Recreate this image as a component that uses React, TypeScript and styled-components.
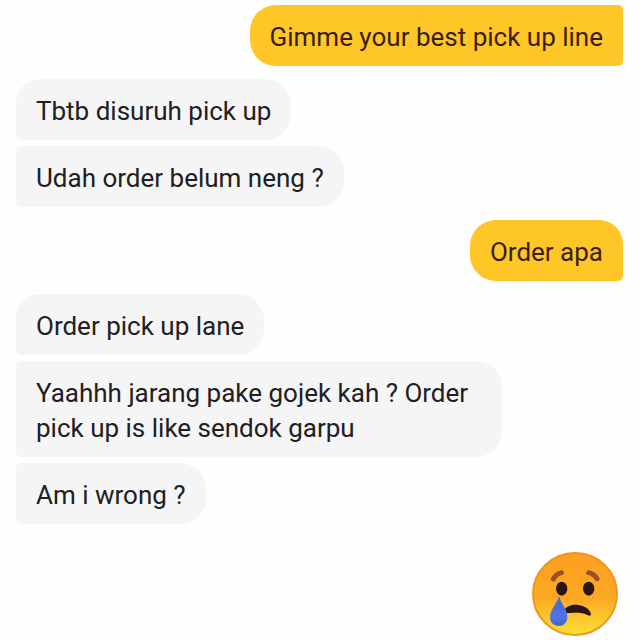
import React from "react";
import styled, { createGlobalStyle, css } from "styled-components";

const GlobalStyle = createGlobalStyle`
  * { box-sizing: border-box; }
  body { margin: 0; background: #fefefe; font-family: Roboto, sans-serif; }
`;

const Conversation = styled.main`
  display: flex;
  flex-direction: column;
  gap: 13px;
  padding: 5px 17px 2px 16px;
`;

const Group = styled.section<{ $sent?: boolean }>`
  display: flex;
  flex-direction: column;
  gap: 6px;
  align-items: ${(p) => (p.$sent ? "flex-end" : "flex-start")};
`;

const Bubble = styled.p<{ $sent?: boolean; $opensGroup?: boolean }>`
  margin: 0;
  max-width: 80%;
  padding: 15px 20px 11px;
  font-size: 26px;
  line-height: 35px;
  ${(p) =>
    p.$sent
      ? css`
          color: #3a1e0c;
          background: #ffc628;
          border-radius: 26px ${p.$opensGroup ? "24px" : "5px"} 5px 26px;
        `
      : css`
          color: #202022;
          background: #f5f5f5;
          border-radius: ${p.$opensGroup ? "24px" : "5px"} 26px 26px 5px;
        `}
`;

const Emoji = styled.svg`
  width: 88px;
  height: 88px;
  margin: 13px 4px 0 0;
`;

type MessageGroup = { sent: boolean; continued?: boolean; lines: string[] };

const messages: MessageGroup[] = [
  { sent: true, continued: true, lines: ["Gimme your best pick up line"] },
  { sent: false, lines: ["Tbtb disuruh pick up", "Udah order belum neng ?"] },
  { sent: true, lines: ["Order apa"] },
  {
    sent: false,
    lines: [
      "Order pick up lane",
      "Yaahhh jarang pake gojek kah ? Order pick up is like sendok garpu",
      "Am i wrong ?",
    ],
  },
];

function CryingFace() {
  return (
    <Emoji viewBox="33 30 264 264" role="img" aria-label="Crying face">
      <defs>
        <linearGradient id="face" x1="0" y1="0" x2="0" y2="1">
          <stop offset="0" stopColor="#fba01f" />
          <stop offset="0.55" stopColor="#fda823" />
          <stop offset="0.78" stopColor="#fcc62a" />
          <stop offset="1" stopColor="#fbdf38" />
        </linearGradient>
        <linearGradient id="rim" x1="0" y1="0" x2="0" y2="1">
          <stop offset="0" stopColor="#ee931f" />
          <stop offset="1" stopColor="#e0a023" />
        </linearGradient>
        <linearGradient id="tear" x1="0" y1="0" x2="0" y2="1">
          <stop offset="0" stopColor="#4668c4" />
          <stop offset="0.7" stopColor="#4f74e8" />
          <stop offset="1" stopColor="#4463cc" />
        </linearGradient>
      </defs>
      <ellipse cx="165" cy="162" rx="126" ry="123" fill="url(#face)" stroke="url(#rim)" strokeWidth="6" />
      <g fill="none" stroke="#98501f" strokeWidth="15" strokeLinecap="round">
        <path d="M100 117 Q109 101 124 98" />
        <path d="M206 98 Q221 101 231 116" />
      </g>
      <ellipse cx="125" cy="146" rx="17" ry="21" fill="#2a1612" />
      <ellipse cx="206" cy="146" rx="17" ry="21" fill="#2a1612" />
      <path
        d="M130 218 C133 200 152 193 171 194 C192 196 210 207 213 222 C213 228 208 228 202 225 C184 217 166 218 136 220 Z"
        fill="#2a1612"
      />
      <path
        d="M117 167 C122 190 142 206 142 231 C142 248 131 258 116 258 C101 258 90 248 90 232 C90 207 112 192 117 167 Z"
        fill="url(#tear)"
      />
    </Emoji>
  );
}

export default function App() {
  return (
    <>
      <GlobalStyle />
      <Conversation>
        {messages.map((group, i) => (
          <Group key={i} $sent={group.sent}>
            {group.lines.map((line, j) => (
              <Bubble
                key={line}
                $sent={group.sent}
                $opensGroup={j === 0 && !group.continued}
              >
                {line}
              </Bubble>
            ))}
          </Group>
        ))}
        <Group $sent>
          <CryingFace />
        </Group>
      </Conversation>
    </>
  );
}
